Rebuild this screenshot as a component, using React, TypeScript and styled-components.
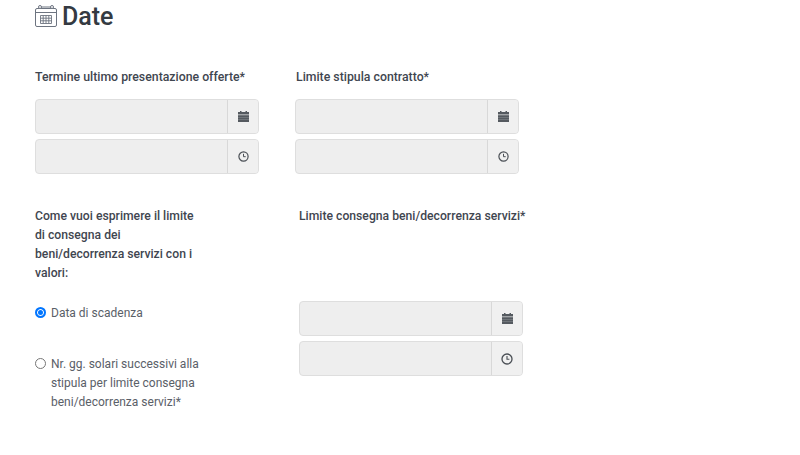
import React from 'react';
import styled, { createGlobalStyle } from 'styled-components';

const GlobalStyle = createGlobalStyle`
	html, body {
		margin: 0;
		background: #fff;
		font-family: Roboto, "Noto Sans", sans-serif;
		color: #3f4650;
	}
`;

const Page = styled.div`
	width: 800px;
	height: 455px;
	overflow: hidden;
	padding: 0 0 0 35px;
	box-sizing: border-box;
`;

const Heading = styled.h2`
	display: flex;
	align-items: center;
	gap: 5px;
	margin: 0;
	height: 34px;
	font-size: 25px;
	font-weight: 500;
	line-height: 34px;
	color: #343a42;
`;

const HeadingIcon = styled.svg`
	margin-bottom: 2px;
`;

const TopRow = styled.div`
	display: flex;
	gap: 36px;
	margin-top: 34px;
`;

const Field = styled.div`
	width: 224px;
`;

const Label = styled.div<{ $inset?: number }>`
	font-size: 12.3px;
	font-weight: 500;
	line-height: 19px;
	height: 19px;
	margin-bottom: 12px;
	padding-left: ${(props) => props.$inset ?? 0}px;
	white-space: nowrap;
	color: #3f4650;
`;

const InputGroup = styled.div`
	display: flex;
	height: 35px;
	box-sizing: border-box;
	background: #eeeeee;
	border: 1px solid #dedede;
	border-radius: 4px;
	& + & {
		margin-top: 5px;
	}
`;

const InputArea = styled.div`
	flex: 1;
`;

const Addon = styled.div`
	width: 30px;
	display: flex;
	align-items: center;
	justify-content: center;
	border-left: 1px solid #d8d8d8;
	background: #f0f0f0;
	border-radius: 0 3px 3px 0;
	color: #4a4f55;
`;

const BottomRow = styled.div`
	display: flex;
	margin-top: 33px;
`;

const LeftColumn = styled.div`
	width: 264px;
`;

const Question = styled.div`
	width: 165px;
	font-size: 12.2px;
	font-weight: 500;
	line-height: 19px;
	color: #3f4650;
`;

const RadioRow = styled.div<{ $top: number }>`
	display: flex;
	gap: 5px;
	width: 170px;
	margin-top: ${(props) => props.$top}px;
	font-size: 12px;
	line-height: 19px;
	color: #5a6068;
`;

const RadioMark = styled.span<{ $checked?: boolean }>`
	flex: none;
	width: 11px;
	height: 11px;
	margin-top: 3px;
	box-sizing: border-box;
	border-radius: 50%;
	border: ${(props) => (props.$checked ? '2px solid #0075ff' : '1px solid #767676')};
	background: ${(props) => (props.$checked ? '#0075ff' : '#fff')};
	box-shadow: ${(props) => (props.$checked ? 'inset 0 0 0 1px #fff' : 'none')};
`;

const RightColumn = styled.div`
	width: 224px;
`;

const WideLabel = styled(Label)`
	margin-bottom: 75px;
	font-size: 12.2px;
`;

function CalendarBig(): JSX.Element {
	return (
		<HeadingIcon width="22" height="22" viewBox="0 1 22 22" fill="none" stroke="#6d7480" strokeWidth="1">
			<rect x="0.5" y="4.5" width="21" height="18" rx="1.5" />
			<path d="M0.5 8.5h21" />
			<path d="M6 3h10" />
			<circle cx="5" cy="3" r="1.5" fill="#fff" />
			<circle cx="17" cy="3" r="1.5" fill="#fff" />
			<path d="M5.5 11.5h11v8h-11zM5.5 14.2h11M5.5 16.8h11M8.2 11.5v8M11 11.5v8M13.8 11.5v8" strokeWidth="0.9" />
		</HeadingIcon>
	);
}

function CalendarSmall(): JSX.Element {
	return (
		<svg width="11" height="11" viewBox="0 0 11 11" fill="#555a60">
			<rect x="2" y="0" width="1.5" height="1.5" />
			<rect x="7.5" y="0" width="1.5" height="1.5" />
			<rect x="0" y="1" width="11" height="2.5" />
			<rect x="0" y="4.2" width="11" height="6.8" />
			<path d="M0 6.3h11v.5H0zM0 8.5h11V9H0z" fill="#8b8f94" />
		</svg>
	);
}

function ClockSmall({ size }: { size: number }): JSX.Element {
	return (
		<svg width={size} height={size} viewBox="0 0 11 11" fill="none" stroke="#4a4f55" strokeWidth="1.2">
			<circle cx="5.5" cy="5.5" r="4.6" />
			<path d="M5.5 2.8v2.9h2.2" strokeWidth="1" />
		</svg>
	);
}

function DateTimeInputs({ clockSize = 11 }: { clockSize?: number }): JSX.Element {
	return (
		<>
			<InputGroup>
				<InputArea />
				<Addon><CalendarSmall /></Addon>
			</InputGroup>
			<InputGroup>
				<InputArea />
				<Addon><ClockSmall size={clockSize} /></Addon>
			</InputGroup>
		</>
	);
}

function App(): JSX.Element {
	return (
		<Page>
			<GlobalStyle />
			<Heading>
				<CalendarBig />
				Date
			</Heading>
			<TopRow>
				<Field>
					<Label>Termine ultimo presentazione offerte*</Label>
					<DateTimeInputs />
				</Field>
				<Field>
					<Label $inset={1}>Limite stipula contratto*</Label>
					<DateTimeInputs />
				</Field>
			</TopRow>
			<BottomRow>
				<LeftColumn>
					<Question>
						Come vuoi esprimere il limite di consegna dei beni/decorrenza servizi con i valori:
					</Question>
					<RadioRow $top={21}>
						<RadioMark $checked />
						Data di scadenza
					</RadioRow>
					<RadioRow $top={32}>
						<RadioMark />
						<span>Nr. gg. solari successivi alla stipula per limite consegna beni/decorrenza servizi*</span>
					</RadioRow>
				</LeftColumn>
				<RightColumn>
					<WideLabel>Limite consegna beni/decorrenza servizi*</WideLabel>
					<DateTimeInputs clockSize={12} />
				</RightColumn>
			</BottomRow>
		</Page>
	);
}

export default App;
